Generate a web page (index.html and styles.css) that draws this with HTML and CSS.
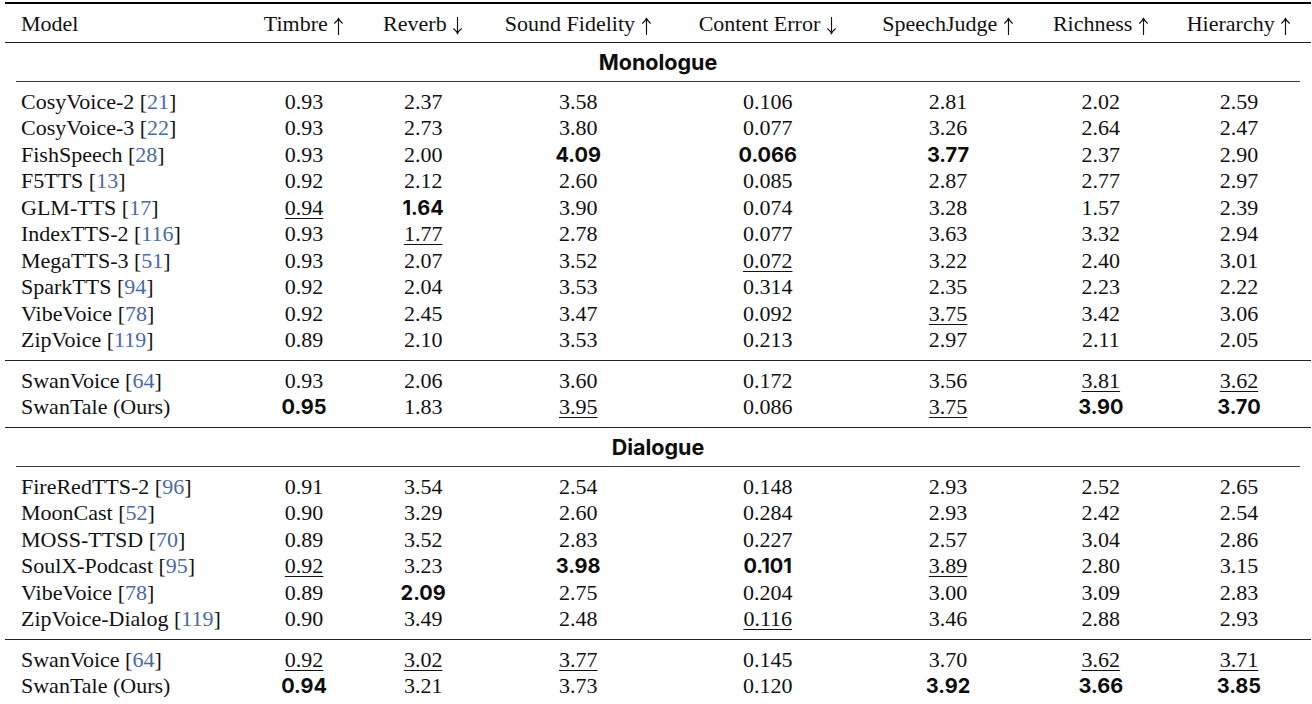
FILE: index.html
```html
<!DOCTYPE html>
<html lang="en">
<head>
<meta charset="utf-8">
<title>Results</title>
<link rel="stylesheet" href="styles.css">
</head>
<body>
<table class="results">
  <colgroup>
    <col class="c-model">
    <col class="c-timbre">
    <col class="c-reverb">
    <col class="c-fid">
    <col class="c-err">
    <col class="c-judge">
    <col class="c-rich">
    <col class="c-hier">
  </colgroup>
  <thead>
    <tr>
      <th class="model">Model</th>
      <th>Timbre <svg class="arr" viewBox="0 0 11 18"><path d="M5.5 1.2V17.6M1.6 6.2C3.4 4.8 4.8 3.2 5.5 1.2C6.2 3.2 7.6 4.8 9.4 6.2"/></svg></th>
      <th>Reverb <svg class="arr" viewBox="0 0 11 18"><path d="M5.5 16.8V0.4M1.6 11.8C3.4 13.2 4.8 14.8 5.5 16.8C6.2 14.8 7.6 13.2 9.4 11.8"/></svg></th>
      <th>Sound Fidelity <svg class="arr" viewBox="0 0 11 18"><path d="M5.5 1.2V17.6M1.6 6.2C3.4 4.8 4.8 3.2 5.5 1.2C6.2 3.2 7.6 4.8 9.4 6.2"/></svg></th>
      <th>Content Error <svg class="arr" viewBox="0 0 11 18"><path d="M5.5 16.8V0.4M1.6 11.8C3.4 13.2 4.8 14.8 5.5 16.8C6.2 14.8 7.6 13.2 9.4 11.8"/></svg></th>
      <th>SpeechJudge <svg class="arr" viewBox="0 0 11 18"><path d="M5.5 1.2V17.6M1.6 6.2C3.4 4.8 4.8 3.2 5.5 1.2C6.2 3.2 7.6 4.8 9.4 6.2"/></svg></th>
      <th>Richness <svg class="arr" viewBox="0 0 11 18"><path d="M5.5 1.2V17.6M1.6 6.2C3.4 4.8 4.8 3.2 5.5 1.2C6.2 3.2 7.6 4.8 9.4 6.2"/></svg></th>
      <th>Hierarchy <svg class="arr" viewBox="0 0 11 18"><path d="M5.5 1.2V17.6M1.6 6.2C3.4 4.8 4.8 3.2 5.5 1.2C6.2 3.2 7.6 4.8 9.4 6.2"/></svg></th>
    </tr>
  </thead>
  <tbody class="section">
    <tr><td colspan="8"><div class="section-title">Monologue</div><div class="cmid"></div></td></tr>
  </tbody>
  <tbody class="group">
    <tr><td class="model">CosyVoice-2 [<span class="cite">21</span>]</td><td>0.93</td><td>2.37</td><td>3.58</td><td>0.106</td><td>2.81</td><td>2.02</td><td>2.59</td></tr>
    <tr><td class="model">CosyVoice-3 [<span class="cite">22</span>]</td><td>0.93</td><td>2.73</td><td>3.80</td><td>0.077</td><td>3.26</td><td>2.64</td><td>2.47</td></tr>
    <tr><td class="model">FishSpeech [<span class="cite">28</span>]</td><td>0.93</td><td>2.00</td><td><b>4.09</b></td><td><b>0.066</b></td><td><b>3.77</b></td><td>2.37</td><td>2.90</td></tr>
    <tr><td class="model">F5TTS [<span class="cite">13</span>]</td><td>0.92</td><td>2.12</td><td>2.60</td><td>0.085</td><td>2.87</td><td>2.77</td><td>2.97</td></tr>
    <tr><td class="model">GLM-TTS [<span class="cite">17</span>]</td><td><u>0.94</u></td><td><b>1.64</b></td><td>3.90</td><td>0.074</td><td>3.28</td><td>1.57</td><td>2.39</td></tr>
    <tr><td class="model">IndexTTS-2 [<span class="cite">116</span>]</td><td>0.93</td><td><u>1.77</u></td><td>2.78</td><td>0.077</td><td>3.63</td><td>3.32</td><td>2.94</td></tr>
    <tr><td class="model">MegaTTS-3 [<span class="cite">51</span>]</td><td>0.93</td><td>2.07</td><td>3.52</td><td><u>0.072</u></td><td>3.22</td><td>2.40</td><td>3.01</td></tr>
    <tr><td class="model">SparkTTS [<span class="cite">94</span>]</td><td>0.92</td><td>2.04</td><td>3.53</td><td>0.314</td><td>2.35</td><td>2.23</td><td>2.22</td></tr>
    <tr><td class="model">VibeVoice [<span class="cite">78</span>]</td><td>0.92</td><td>2.45</td><td>3.47</td><td>0.092</td><td><u>3.75</u></td><td>3.42</td><td>3.06</td></tr>
    <tr><td class="model">ZipVoice [<span class="cite">119</span>]</td><td>0.89</td><td>2.10</td><td>3.53</td><td>0.213</td><td>2.97</td><td>2.11</td><td>2.05</td></tr>
  </tbody>
  <tbody class="group">
    <tr><td class="model">SwanVoice [<span class="cite">64</span>]</td><td>0.93</td><td>2.06</td><td>3.60</td><td>0.172</td><td>3.56</td><td><u>3.81</u></td><td><u>3.62</u></td></tr>
    <tr><td class="model">SwanTale (Ours)</td><td><b>0.95</b></td><td>1.83</td><td><u>3.95</u></td><td>0.086</td><td><u>3.75</u></td><td><b>3.90</b></td><td><b>3.70</b></td></tr>
  </tbody>
  <tbody class="section">
    <tr><td colspan="8"><div class="section-title">Dialogue</div><div class="cmid"></div></td></tr>
  </tbody>
  <tbody class="group">
    <tr><td class="model">FireRedTTS-2 [<span class="cite">96</span>]</td><td>0.91</td><td>3.54</td><td>2.54</td><td>0.148</td><td>2.93</td><td>2.52</td><td>2.65</td></tr>
    <tr><td class="model">MoonCast [<span class="cite">52</span>]</td><td>0.90</td><td>3.29</td><td>2.60</td><td>0.284</td><td>2.93</td><td>2.42</td><td>2.54</td></tr>
    <tr><td class="model">MOSS-TTSD [<span class="cite">70</span>]</td><td>0.89</td><td>3.52</td><td>2.83</td><td>0.227</td><td>2.57</td><td>3.04</td><td>2.86</td></tr>
    <tr><td class="model">SoulX-Podcast [<span class="cite">95</span>]</td><td><u>0.92</u></td><td>3.23</td><td><b>3.98</b></td><td><b>0.101</b></td><td><u>3.89</u></td><td>2.80</td><td>3.15</td></tr>
    <tr><td class="model">VibeVoice [<span class="cite">78</span>]</td><td>0.89</td><td><b>2.09</b></td><td>2.75</td><td>0.204</td><td>3.00</td><td>3.09</td><td>2.83</td></tr>
    <tr><td class="model">ZipVoice-Dialog [<span class="cite">119</span>]</td><td>0.90</td><td>3.49</td><td>2.48</td><td><u>0.116</u></td><td>3.46</td><td>2.88</td><td>2.93</td></tr>
  </tbody>
  <tbody class="group">
    <tr><td class="model">SwanVoice [<span class="cite">64</span>]</td><td><u>0.92</u></td><td><u>3.02</u></td><td><u>3.77</u></td><td>0.145</td><td>3.70</td><td><u>3.62</u></td><td><u>3.71</u></td></tr>
    <tr><td class="model">SwanTale (Ours)</td><td><b>0.94</b></td><td>3.21</td><td>3.73</td><td>0.120</td><td><b>3.92</b></td><td><b>3.66</b></td><td><b>3.85</b></td></tr>
  </tbody>
</table>
</body>
</html>
```
FILE: styles.css
```css
html, body {
  margin: 0;
  padding: 0;
  background: #ffffff;
}

body {
  padding-top: 2px;
  font-family: "Liberation Serif", "DejaVu Serif", serif;
  color: #111111;
}

.results {
  margin-left: 5px;
  width: 1306px;
  table-layout: fixed;
  border-collapse: collapse;
  font-family: "Liberation Serif", "DejaVu Serif", serif;
  font-size: 22px;
}

.c-model { width: 239px; }
.c-timbre { width: 120px; }
.c-reverb { width: 118px; }
.c-fid { width: 192px; }
.c-err { width: 187px; }
.c-judge { width: 173.5px; }
.c-rich { width: 132px; }
.c-hier { width: 144px; }

.results th,
.results td {
  padding: 0;
  line-height: 26.5px;
  text-align: center;
  font-weight: normal;
  white-space: nowrap;
  vertical-align: baseline;
}

.results .model {
  text-align: left;
  padding-left: 16px;
}

.results thead tr {
  border-top: 2px solid #000000;
  border-bottom: 1px solid #222222;
}

.results thead th {
  padding-top: 7px;
  padding-bottom: 4.5px;
}

.arr {
  width: 11px;
  height: 18px;
  vertical-align: -4px;
  fill: none;
  stroke: #111111;
  stroke-width: 1.15;
  stroke-linecap: round;
  stroke-linejoin: round;
}

.section td {
  padding: 0;
}

.section-title {
  font-family: "Inter", "Noto Sans", sans-serif;
  font-weight: 700;
  font-size: 21.5px;
  line-height: 26.5px;
  padding-top: 6px;
  padding-bottom: 5.6px;
  text-align: center;
  color: #0d0d0d;
}

.cmid {
  margin: 0 11px;
  border-top: 1px solid #3a3a3a;
}

.group {
  border-bottom: 1px solid #222222;
}

.group tr:first-child td {
  padding-top: 6.5px;
}

.group tr:last-child td {
  padding-bottom: 6.5px;
}

.cite {
  color: #4a69a8;
}

.results b {
  font-family: "Inter", "Noto Sans", sans-serif;
  font-weight: 700;
  font-size: 20px;
  color: #0d0d0d;
}

.results u {
  text-decoration: underline;
  text-decoration-thickness: 1px;
  text-underline-offset: 3px;
}
```
